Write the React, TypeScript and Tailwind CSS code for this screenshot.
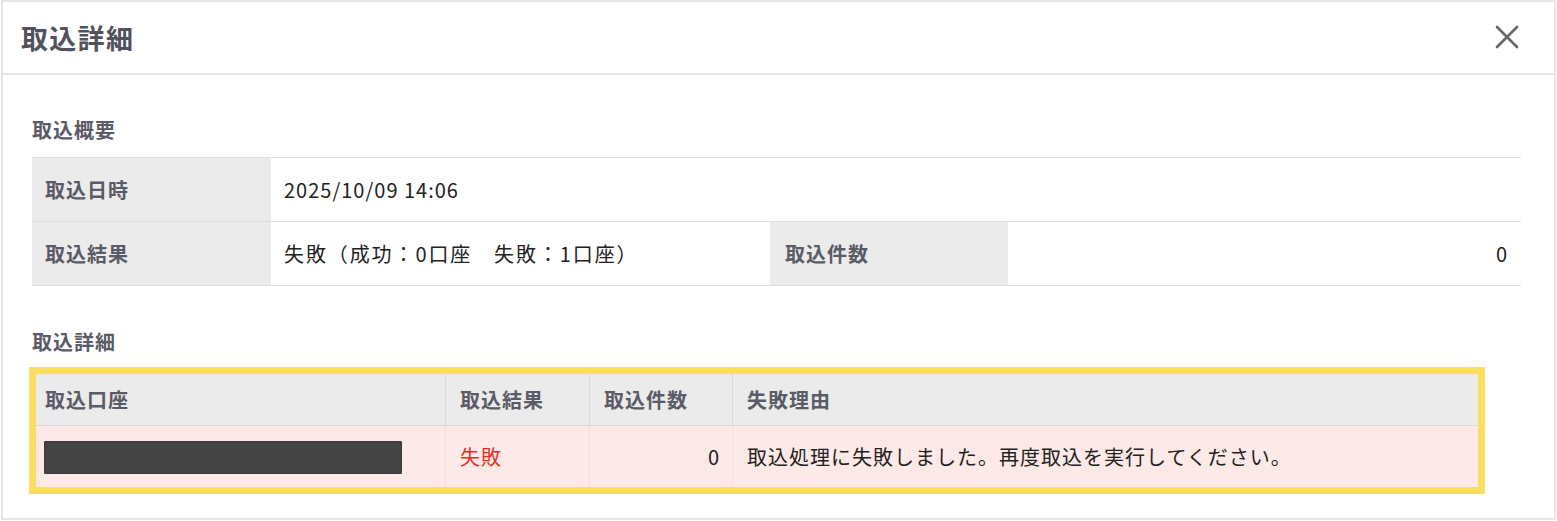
import React from "react";

const font = "font-['Noto_Sans_CJK_JP','Noto_Sans',sans-serif]";

export default function App() {
  return (
    <div className={`w-[1557px] h-[521px] bg-white pl-[1px] ${font}`}>
      <div className="w-[1555px] h-[520px] border-2 border-[#e6e6e6] flex flex-col">
        {/* header */}
        <div className="h-[73px] shrink-0 border-b-2 border-[#e6e6e6] flex items-center justify-between pl-[18px] pr-[34px]">
          <h1 className="text-[27px] leading-[36px] font-bold tracking-[1.3px] text-[#52525c]">取込詳細</h1>
          <svg width="26" height="26" viewBox="0 0 26 26" className="mt-[-1px]">
            <path d="M3 3 L23 23 M23 3 L3 23" stroke="#666" strokeWidth="2.6" strokeLinecap="round" fill="none" />
          </svg>
        </div>

        {/* body */}
        <div className="pl-[29px] pt-[41px] flex flex-col text-[20px] tracking-[1px]">
          <div className="h-[28px] leading-[28px] font-bold text-[#5a5b66]">取込概要</div>
          <div className="mt-[13px] w-[1489px] border-t border-[#dedede]">
            <div className="flex h-[64px] border-b border-[#dedede]">
              <div className="w-[239px] bg-[#ebebeb] flex items-center pl-[13px] font-bold text-[#5a5b66]">取込日時</div>
              <div className="flex-1 flex items-center pl-[13px] text-[#222]">2025/10/09 14:06</div>
            </div>
            <div className="flex h-[64px] border-b border-[#dedede]">
              <div className="w-[239px] bg-[#ebebeb] flex items-center pl-[13px] font-bold text-[#5a5b66]">取込結果</div>
              <div className="w-[499px] flex items-center pl-[13px] text-[#222] tracking-[1.9px]">失敗（成功：0口座　失敗：1口座）</div>
              <div className="w-[238px] bg-[#ebebeb] flex items-center pl-[15px] font-bold text-[#5a5b66]">取込件数</div>
              <div className="flex-1 flex items-center justify-end pr-[13px] text-[#222]">0</div>
            </div>
          </div>

          <div className="mt-[42px] h-[28px] leading-[28px] font-bold text-[#5a5b66]">取込詳細</div>
          <div className="mt-[11px] ml-[-3px] w-[1456px] border-[7px] border-[#f9de62]">
            <div className="flex h-[52px] bg-[#ebebeb] border-b border-[#d8d8d8] font-bold text-[#5a5b66]">
              <div className="w-[410px] border-r border-[#dadada] flex items-center pl-[9px]">取込口座</div>
              <div className="w-[144px] border-r border-[#dadada] flex items-center pl-[14px]">取込結果</div>
              <div className="w-[143px] border-r border-[#dadada] flex items-center pl-[14px]">取込件数</div>
              <div className="flex-1 flex items-center pl-[14px]">失敗理由</div>
            </div>
            <div className="flex h-[61px] bg-[#fde9e7] text-[#222]">
              <div className="w-[410px] border-r border-[#f6dedc] flex items-center pl-[8px] pt-[2px]">
                <div className="w-[358px] h-[33px] bg-[#444] border border-[#3a3a3a] rounded-[1px]" />
              </div>
              <div className="w-[144px] border-r border-[#f6dedc] flex items-center pl-[14px] text-[#e2321f]">失敗</div>
              <div className="w-[143px] border-r border-[#f6dedc] flex items-center justify-end pr-[12px]">0</div>
              <div className="flex-1 flex items-center pl-[14px]">取込処理に失敗しました。再度取込を実行してください。</div>
            </div>
          </div>
        </div>
      </div>
    </div>
  );
}
